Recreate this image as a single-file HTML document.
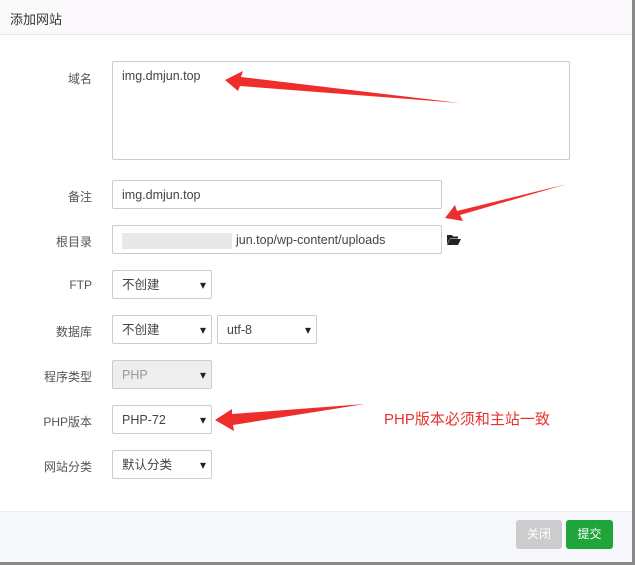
<!DOCTYPE html>
<html><head><meta charset="utf-8"><style>
*{box-sizing:border-box;margin:0;padding:0}
body{width:635px;height:565px;background:#8a8a8a;font-family:"Liberation Sans","Noto Sans CJK SC",sans-serif;position:relative;overflow:hidden}
.dlg{position:absolute;left:0;top:0;width:632px;height:562px;background:#fff}
.hd{height:35px;background:#fbf9fc;border-bottom:1px solid #e6e6e6;font-size:13px;color:#333;padding:9px 10px}
.lb{position:absolute;font-size:12px;color:#555;text-align:right;width:92px;left:0}
.in{position:absolute;border:1px solid #ccc;border-radius:2px;background:#fff;font-size:12.5px;color:#444;padding:0 9px;line-height:28px}
.sel::after{content:"▾";position:absolute;right:5px;top:0;font-size:12px;color:#222}
.ft{position:absolute;left:0;top:511px;width:632px;height:51px;background:#f6f8fb;border-top:1px solid #eee}
.btn{position:absolute;top:520px;height:29px;width:46px;border-radius:3px;color:#fff;font-size:12px;text-align:center;line-height:29px}
</style></head><body>
<div class="dlg">
<div class="hd">添加网站</div>
<div class="lb" style="top:70px">域名</div>
<div class="in" style="left:112px;top:61px;width:458px;height:99px;line-height:28px">img.dmjun.top</div>
<div class="lb" style="top:188px">备注</div>
<div class="in" style="left:112px;top:180px;width:330px;height:29px">img.dmjun.top</div>
<div class="lb" style="top:233px">根目录</div>
<div class="in" style="left:112px;top:225px;width:330px;height:29px"><span style="display:inline-block;width:110px;height:16px;background:#e8e8e8;vertical-align:middle;margin-right:4px"></span>jun.top/wp-content/uploads</div>
<svg style="position:absolute;left:447px;top:234px" width="14" height="11"><path d="M0 1h5l1 1.5h5v2H3L0 10z M3 5h11l-3 6H0z" fill="#222"/></svg>
<div class="lb" style="top:278px">FTP</div>
<div class="in sel" style="left:112px;top:270px;width:100px;height:29px">不创建</div>
<div class="lb" style="top:323px">数据库</div>
<div class="in sel" style="left:112px;top:315px;width:100px;height:29px">不创建</div>
<div class="in sel" style="left:217px;top:315px;width:100px;height:29px">utf-8</div>
<div class="lb" style="top:368px">程序类型</div>
<div class="in sel" style="left:112px;top:360px;width:100px;height:29px;background:#eee;color:#999">PHP</div>
<div class="lb" style="top:413px">PHP版本</div>
<div class="in sel" style="left:112px;top:405px;width:100px;height:29px">PHP-72</div>
<div class="lb" style="top:458px">网站分类</div>
<div class="in sel" style="left:112px;top:450px;width:100px;height:29px">默认分类</div>
<div style="position:absolute;left:384px;top:408px;font-size:15px;color:#e8312f">PHP版本必须和主站一致</div>
<div class="ft"></div>
<div class="btn" style="left:516px;background:#ccc">关闭</div>
<div class="btn" style="left:566px;background:#20a53a;width:47px">提交</div>
<svg style="position:absolute;left:0;top:0" width="632" height="562">
<polygon points="225,80 243,71 241,77 460,103 240,86 238,91" fill="#ee2d2d"/>
<polygon points="445,218 455,205 457,211 567,184 460,215 463,221" fill="#ee2d2d"/>
<polygon points="215,420 232,409 232,414 365,404 233,425 234,431" fill="#ee2d2d"/>
</svg>
</div>
</body></html>
